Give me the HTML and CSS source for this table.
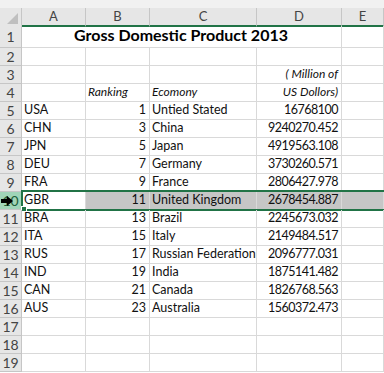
FILE: index.html
```
<!DOCTYPE html>
<html lang="en">
<head>
    <meta charset="UTF-8">
    <title>Gross Domestic Product 2013</title>
    <link rel="stylesheet" href="styles.css">
</head>
<body>
    <div class="sheet">
        <div class="topbar"></div>

        <!-- Column headers -->
        <div class="row heads">
            <div class="corner"><span class="tri"></span></div>
            <div class="colhead">A</div>
            <div class="colhead">B</div>
            <div class="colhead">C</div>
            <div class="colhead">D</div>
            <div class="colhead">E</div>
        </div>

        <div class="row title-row">
            <div class="rowhead">1</div>
            <div class="cell title">Gross Domestic Product 2013</div>
            <div class="cell"></div>
        </div>
        <div class="row">
            <div class="rowhead">2</div>
            <div class="cell"></div><div class="cell"></div><div class="cell"></div><div class="cell"></div><div class="cell"></div>
        </div>
        <div class="row">
            <div class="rowhead">3</div>
            <div class="cell"></div><div class="cell"></div><div class="cell"></div>
            <div class="cell r it">( Million of</div>
            <div class="cell"></div>
        </div>
        <div class="row">
            <div class="rowhead">4</div>
            <div class="cell"></div>
            <div class="cell it">Ranking</div>
            <div class="cell it">Ecomony</div>
            <div class="cell r it">US Dollors)</div>
            <div class="cell"></div>
        </div>
        <div class="row">
            <div class="rowhead">5</div>
            <div class="cell">USA</div><div class="cell r">1</div><div class="cell">Untied Stated</div><div class="cell r num">16768100</div><div class="cell"></div>
        </div>
        <div class="row">
            <div class="rowhead">6</div>
            <div class="cell">CHN</div><div class="cell r">3</div><div class="cell">China</div><div class="cell r num">9240270.452</div><div class="cell"></div>
        </div>
        <div class="row">
            <div class="rowhead">7</div>
            <div class="cell">JPN</div><div class="cell r">5</div><div class="cell">Japan</div><div class="cell r num">4919563.108</div><div class="cell"></div>
        </div>
        <div class="row">
            <div class="rowhead">8</div>
            <div class="cell">DEU</div><div class="cell r">7</div><div class="cell">Germany</div><div class="cell r num">3730260.571</div><div class="cell"></div>
        </div>
        <div class="row">
            <div class="rowhead">9</div>
            <div class="cell">FRA</div><div class="cell r">9</div><div class="cell">France</div><div class="cell r num">2806427.978</div><div class="cell"></div>
        </div>
        <div class="row selected">
            <div class="rowhead">10
                <svg class="cursor" width="12" height="10" viewBox="0 0 12 10">
                    <path d="M0 3h6V0l6 5-6 5V7H0z" fill="#000"/>
                </svg>
            </div>
            <div class="cell active">GBR</div><div class="cell r">11</div><div class="cell">United Kingdom</div><div class="cell r num">2678454.887</div><div class="cell"></div>
            <div class="selbox"><span class="handle"></span></div>
        </div>
        <div class="row">
            <div class="rowhead">11</div>
            <div class="cell">BRA</div><div class="cell r">13</div><div class="cell">Brazil</div><div class="cell r num">2245673.032</div><div class="cell"></div>
        </div>
        <div class="row">
            <div class="rowhead">12</div>
            <div class="cell">ITA</div><div class="cell r">15</div><div class="cell">Italy</div><div class="cell r num">2149484.517</div><div class="cell"></div>
        </div>
        <div class="row">
            <div class="rowhead">13</div>
            <div class="cell">RUS</div><div class="cell r">17</div><div class="cell">Russian Federation</div><div class="cell r num">2096777.031</div><div class="cell"></div>
        </div>
        <div class="row">
            <div class="rowhead">14</div>
            <div class="cell">IND</div><div class="cell r">19</div><div class="cell">India</div><div class="cell r num">1875141.482</div><div class="cell"></div>
        </div>
        <div class="row">
            <div class="rowhead">15</div>
            <div class="cell">CAN</div><div class="cell r">21</div><div class="cell">Canada</div><div class="cell r num">1826768.563</div><div class="cell"></div>
        </div>
        <div class="row">
            <div class="rowhead">16</div>
            <div class="cell">AUS</div><div class="cell r">23</div><div class="cell">Australia</div><div class="cell r num">1560372.473</div><div class="cell"></div>
        </div>
        <div class="row">
            <div class="rowhead">17</div>
            <div class="cell"></div><div class="cell"></div><div class="cell"></div><div class="cell"></div><div class="cell"></div>
        </div>
        <div class="row">
            <div class="rowhead">18</div>
            <div class="cell"></div><div class="cell"></div><div class="cell"></div><div class="cell"></div><div class="cell"></div>
        </div>
        <div class="row">
            <div class="rowhead">19</div>
            <div class="cell"></div><div class="cell"></div><div class="cell"></div><div class="cell"></div><div class="cell"></div>
        </div>
    </div>
</body>
</html>
```

FILE: styles.css
```
/* General */
body {
    margin: 0;
    background-color: #fff;
    font-family: 'Lato', 'Liberation Sans', sans-serif;
    color: #000;
    overflow: hidden;
}

.sheet {
    width: 384px;
    height: 373px;
    overflow: hidden;
}

.topbar {
    height: 8px;
    background-color: #f1f1f1;
}

/* Rows */
.row {
    position: relative;
    display: grid;
    grid-template-columns: 22px 64px 64px 107px 85px 1fr;
    height: 18px;
}
.title-row {
    height: 22px;
}

/* Headers */
.heads {
    height: 18px;
    background-color: #e6e6e6;
}
.corner {
    position: relative;
    border-right: 1px solid #c6c6c6;
    border-bottom: 2px solid #e6e6e6;
}
.tri {
    position: absolute;
    right: 3px;
    bottom: 1px;
    width: 0;
    height: 0;
    border-left: 11px solid transparent;
    border-bottom: 11px solid #bfbfbf;
}
.colhead {
    display: flex;
    justify-content: center;
    align-items: center;
    border-right: 1px solid #c6c6c6;
    border-bottom: 2px solid #217346;
    font-size: 13px;
    color: #444;
    padding-bottom: 1px;
}
.rowhead {
    position: relative;
    display: flex;
    justify-content: center;
    align-items: center;
    background-color: #e6e6e6;
    border-right: 1px solid #c6c6c6;
    border-bottom: 1px solid #c6c6c6;
    font-size: 14px;
    color: #444;
    box-sizing: border-box;
}

/* Cells */
.cell {
    display: flex;
    align-items: flex-end;
    padding: 0 3px 2px 2px;
    border-right: 1px solid #d9d9d9;
    border-bottom: 1px solid #d9d9d9;
    font-size: 12.5px;
    color: #111;
    white-space: nowrap;
    overflow: hidden;
    box-sizing: border-box;
}
.cell.r {
    justify-content: flex-end;
}
.cell.num {
    letter-spacing: -0.5px;
}
.cell.it {
    font-style: italic;
    font-size: 12px;
}
.title {
    grid-column: span 4;
    justify-content: center;
    font-size: 16px;
    font-weight: bold;
    color: #000;
    padding-bottom: 3px;
}

/* Selected row */
.selected .cell {
    background-color: #c6c6c6;
}
.selected .cell.active {
    background-color: #fff;
}
.selected .rowhead {
    background-color: #a0d5b8;
    color: #1e5f3b;
    border-right: 1px solid #217346;
}
.cursor {
    position: absolute;
    left: 1px;
    top: 4px;
}
.selbox {
    position: absolute;
    left: 21px;
    right: 0;
    top: -2px;
    bottom: -1px;
    border-top: 2px solid #217346;
    border-bottom: 2px solid #217346;
    border-left: 2px solid #217346;
}
.handle {
    position: absolute;
    left: -2px;
    bottom: -3px;
    width: 4px;
    height: 4px;
    background-color: #217346;
    border: 1px solid #fff;
}
```
